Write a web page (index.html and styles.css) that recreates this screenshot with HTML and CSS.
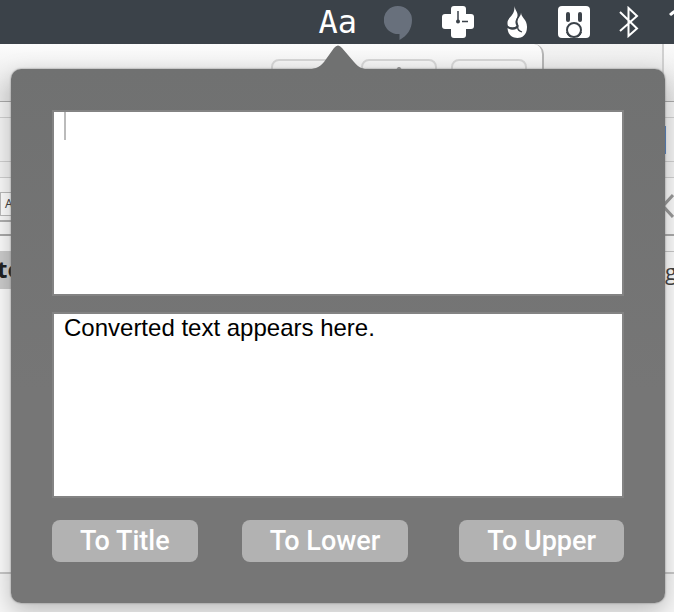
FILE: index.html
```
<!DOCTYPE html>
<html lang="en">
<head>
<meta charset="utf-8">
<title>Case converter</title>
<link rel="stylesheet" href="styles.css">
</head>
<body>
<header class="menubar">
  <span class="app-mark">Aa</span>
  <svg class="icon-bubble" width="28" height="34" viewBox="0 0 28 34" aria-hidden="true"><path d="M14 0a14 14 0 0 1 14 14c0 9-5 16-12.500 20v-6.100A14 14 0 1 1 14 0z" fill="#68707c"/></svg>
  <svg class="icon-cross" width="32" height="32" viewBox="0 0 32 32" aria-hidden="true"><rect x="9" width="15" height="32" rx="3" fill="#fff"/><rect y="8" width="32" height="15" rx="3" fill="#fff"/><path d="M16 5v9M20 15.500h6" stroke="#3b4249" stroke-width="1.500"/><circle cx="16" cy="15.500" r="2" fill="#3b4249"/></svg>
  <svg class="icon-flame" width="21" height="32" viewBox="0 0 21 32" aria-hidden="true"><path d="M7.500 0C8 5 12 6 10 12 8 15 8 17 9.500 20 7 22 4 22 1 20-1 14 3 12 5 9 7 6 7.500 4 7.500 0z" fill="#fff"/><path d="M14 6.500c0 5 6.500 7 6 15C20 29 15 32 10.500 32 5 32 1 29 .5 22c5 3 9 2 10.500-1C12 18 9 17 11 13c2-3 3-4 3-6.500z" fill="#fff"/><path d="M11 11c-3 5-1 6 0 9-1 3 1 5 4 6M1 21c4 2 7 1.500 10-1" fill="none" stroke="#3b4249" stroke-width="1.300"/></svg>
  <svg class="icon-rabbit" width="32" height="32" viewBox="0 0 32 32" aria-hidden="true"><rect width="32" height="32" rx="4" fill="#fff"/><rect x="8" y="6" width="4" height="10" rx="2" fill="#3b4249"/><rect x="20" y="6" width="4" height="10" rx="2" fill="#3b4249"/><circle cx="16" cy="24" r="7" fill="#fff" stroke="#3b4249" stroke-width="2"/><path d="M8.500 26q1 4 4 5M23.500 26q-1 4-4 5" fill="none" stroke="#3b4249" stroke-width="1"/></svg>
  <svg class="icon-bluetooth" width="20" height="32" viewBox="0 0 20 32" aria-hidden="true"><path d="M1 6l17 16.500-8.500 7.500V2L18 10 1 25" fill="none" stroke="#fff" stroke-width="2"/></svg>
  <svg class="icon-wifi" width="36" height="26" viewBox="0 0 36 26" aria-hidden="true"><path d="M1 9Q18-6 35 9M7 15q11-10 22 0" fill="none" stroke="#fff" stroke-width="3"/><circle cx="18" cy="22" r="3" fill="#fff"/></svg>
</header>
<main class="desktop">
  <div class="backdrop" aria-hidden="true">
    <div class="titlebar">
      <div class="sheet">
        <span class="tool"></span>
        <span class="tool"><svg width="8" height="5" viewBox="0 0 8 5"><path d="M0 5l3-4h2l3 4z" fill="#999"/></svg></span>
        <span class="tool"></span>
      </div>
      <div class="side"></div>
    </div>
    <div class="strip strip-thin"></div>
    <div class="strip strip-tall"><span class="accent"></span></div>
    <div class="strip strip-thin"></div>
    <div class="strip strip-format">
      <div class="format-bar"><span class="style-box">A</span></div>
      <svg width="12" height="26" viewBox="0 0 12 26"><path d="M11 2L1 13l10 11" fill="none" stroke="#999" stroke-width="3"/></svg>
    </div>
    <div class="document">
      <span class="selection">te</span>
      <span class="fragment">g</span>
    </div>
    <div class="footer"></div>
  </div>
  <section class="popover">
    <svg class="arrow" width="66" height="26" viewBox="0 0 66 26" aria-hidden="true"><path d="M0 26C9 25 14 24 19 18L29 4q4-5 8 0l12 14c5 6 9 7 17 8z" fill="#707171"/></svg>
    <textarea class="field" aria-label="Text to convert"></textarea>
    <span class="caret"></span>
    <textarea class="field" aria-label="Converted text" readonly>Converted text appears here.</textarea>
    <div class="actions">
      <button type="button">To Title</button>
      <button type="button">To Lower</button>
      <button type="button">To Upper</button>
    </div>
  </section>
</main>
</body>
</html>
```
FILE: styles.css
```
* { box-sizing: border-box; }

body {
  margin: 0;
  min-height: 100vh;
  display: flex;
  flex-direction: column;
  overflow: hidden;
  font-family: "Liberation Sans", Arial, sans-serif;
  background: #f7f7f7;
}

.menubar {
  display: flex;
  justify-content: flex-end;
  align-items: flex-start;
  height: 44px;
  padding-top: 6px;
  overflow: hidden;
  background: #3b4249;
}

.menubar > * { flex: none; }

.app-mark {
  margin-right: 27px;
  font: 32px/32px "DejaVu Sans Mono", monospace;
  color: #fff;
}

.icon-bubble { margin-right: 30px; }
.icon-cross { margin-right: 33px; }
.icon-flame { margin-right: 30px; }
.icon-rabbit { margin-right: 29px; }
.icon-bluetooth { margin-right: 30px; }
.icon-wifi { margin-right: -31px; }

.desktop {
  position: relative;
  flex: 1;
  padding: 25px 9px 9px 11px;
}

.backdrop {
  position: absolute;
  inset: 0;
  display: flex;
  flex-direction: column;
  overflow: hidden;
}

.titlebar {
  display: flex;
  justify-content: space-between;
  height: 58px;
  background: linear-gradient(#f4f4f4, #e0e0e0);
  border-bottom: 1px solid #aaa;
}

.sheet {
  display: flex;
  justify-content: flex-end;
  gap: 14px;
  width: 544px;
  padding: 15px 15px 0 0;
  background: linear-gradient(#fcfcfc, #e8e8e8 50px);
  border-right: 2px solid #b5b5b5;
  border-top-right-radius: 10px;
}

.tool {
  display: flex;
  justify-content: center;
  align-items: flex-start;
  width: 76px;
  height: 40px;
  padding-top: 5px;
  border: 2px solid #d6d6d6;
  border-radius: 8px;
}

.side {
  width: 12px;
  border-left: 2px solid #d0d0d0;
  background: linear-gradient(#fafafa, #e8e8e8);
}

.strip {
  display: flex;
  justify-content: space-between;
  align-items: center;
  background: #f4f4f4;
  border-bottom: 1px solid #d0d0d0;
}

.strip-thin { height: 16px; }
.strip-tall { height: 44px; justify-content: flex-end; }
.strip-format { height: 58px; background: #fafafa; border-bottom: 2px solid #aaa; }

.accent {
  width: 8px;
  height: 28px;
  margin-right: 8px;
  background: #4c83cf;
}

.format-bar {
  display: flex;
  align-items: center;
  align-self: flex-start;
  width: 50%;
  height: 44px;
  padding-top: 12px;
  padding-bottom: 2px;
  border-bottom: 2px solid #b0b0b0;
}

.style-box {
  width: 40px;
  height: 24px;
  padding-left: 4px;
  border: 1px solid #bbb;
  font: 12px/22px "Noto Sans", sans-serif;
  color: #444;
  background: #fff;
}

.document {
  display: flex;
  justify-content: space-between;
  flex: 1;
  padding-top: 15px;
  background: #fcfcfc;
}

.selection {
  width: 60px;
  height: 38px;
  margin-left: -3px;
  font: bold 24px/36px "Open Sans", sans-serif;
  color: #222;
  background: #ccc;
}

.fragment {
  width: 14px;
  border-top: 1px solid #c8c8c8;
  padding-left: 5px;
  font: 22px/38px "Open Sans", sans-serif;
  color: #444;
}

.footer {
  height: 40px;
  border-top: 2px solid #c8c8c8;
}

.popover {
  position: relative;
  display: flex;
  flex-direction: column;
  gap: 16px;
  padding: 41px;
  border-radius: 10px;
  background: linear-gradient(#707171, #767676 60%);
  box-shadow: 0 0 2px #777, 0 8px 24px rgba(0, 0, 0, 0.25);
}

.arrow {
  position: absolute;
  top: -25px;
  left: 50%;
  margin-left: -33px;
}

.field {
  display: block;
  width: 100%;
  height: 186px;
  margin: 0;
  padding: 0 10px;
  border: 2px solid #838383;
  border-radius: 0;
  outline: none;
  resize: none;
  font: 24px/28px "Liberation Sans", Arial, sans-serif;
  color: #000;
  background: #fff;
}

.caret {
  position: absolute;
  top: 43px;
  left: 53px;
  width: 2px;
  height: 28px;
  background: #bbb;
}

.actions {
  display: flex;
  gap: 44px;
  padding-top: 6px;
}

.actions button {
  height: 42px;
  padding: 0 28px;
  border: 0;
  border-radius: 8px;
  font: 500 27px/42px Roboto, sans-serif;
  color: #fff;
  background: #b2b2b2;
}

.actions button:last-child { margin-left: auto; }
```
